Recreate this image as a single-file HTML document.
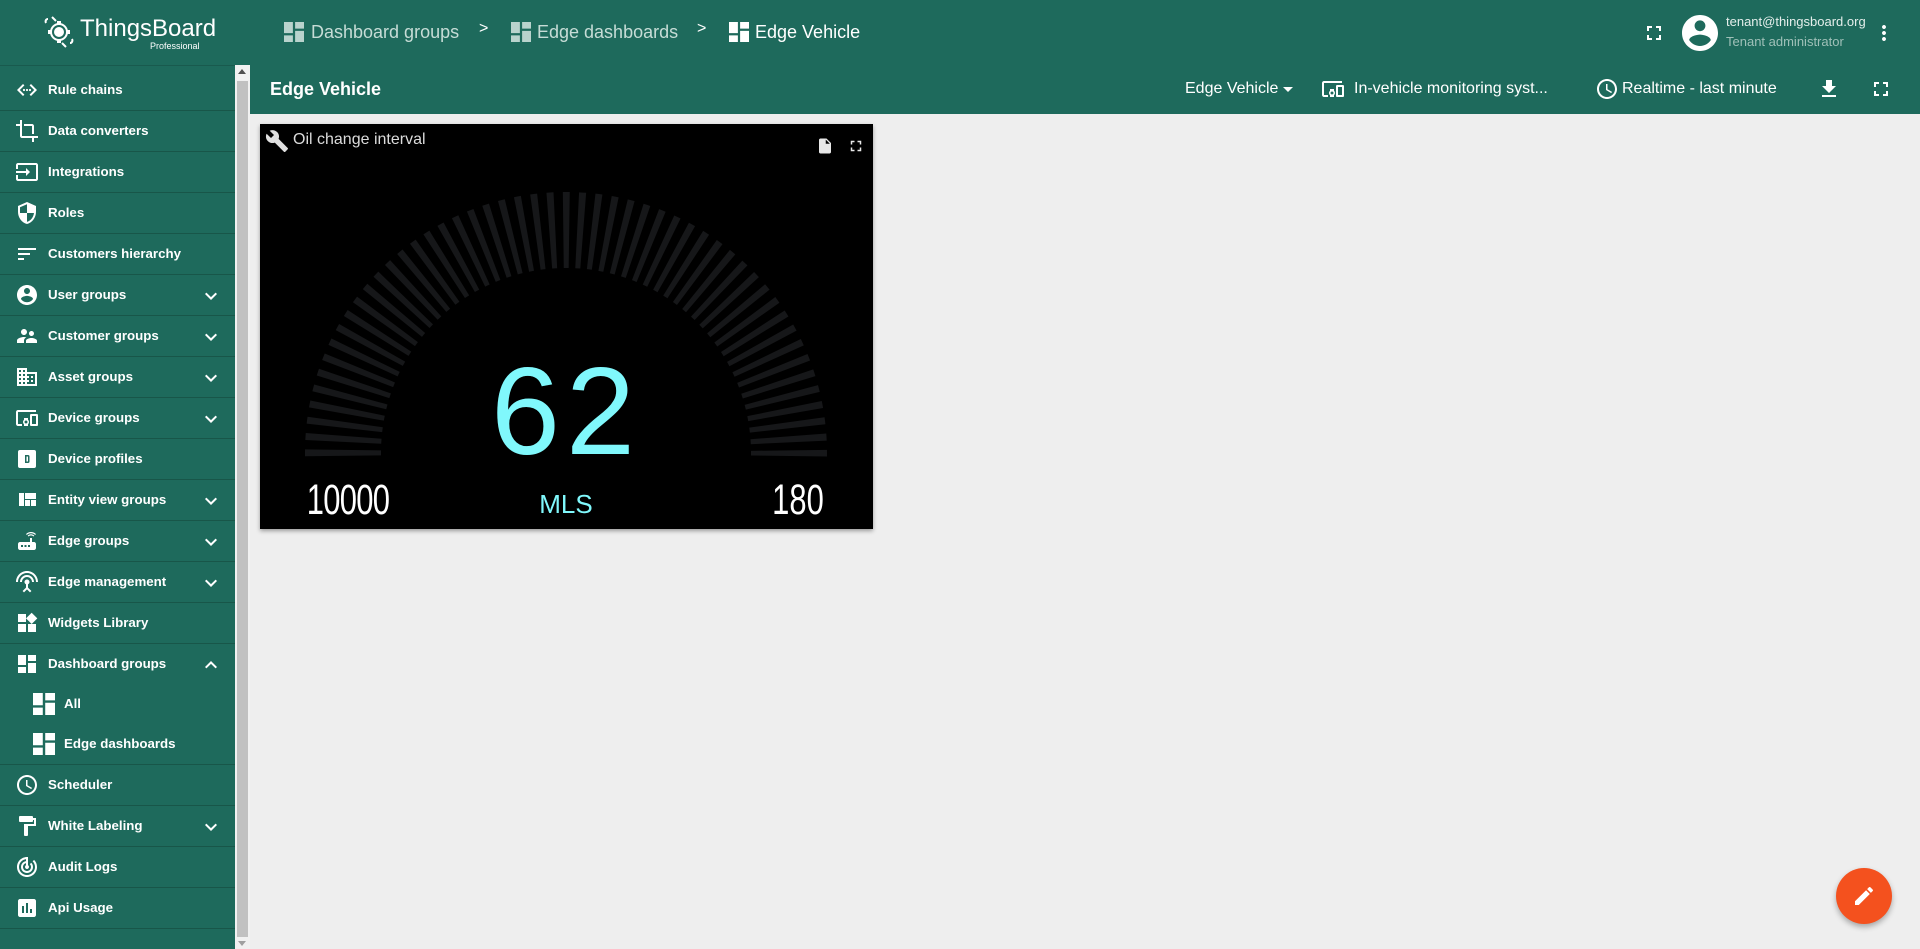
<!DOCTYPE html>
<html><head><meta charset="utf-8"><style>
*{box-sizing:border-box;margin:0;padding:0}
body{width:1920px;height:949px;overflow:hidden;background:#eeeeee;font-family:"Liberation Sans",sans-serif;position:relative}
.hdr{position:absolute;left:0;top:0;width:1920px;height:65px;background:#1e6a5c}
.side{position:absolute;left:0;top:65px;width:235px;height:884px;background:#1e6a5c;border-top:1px solid #195a4e}
.item{position:absolute;left:0;width:235px;height:41px;border-bottom:1px solid #185649;color:#fff;font-size:13.3px;font-weight:bold}
.item svg.ic{position:absolute;left:15px;top:8px;width:24px;height:24px;fill:#fff}
.item span{position:absolute;left:48px;top:12px}
.item svg.ch{position:absolute;left:199px;top:9px;width:24px;height:24px;fill:#fff}
.sub{position:absolute;left:0;width:235px;height:40px;color:#fff;font-size:13.3px;font-weight:bold}
.sub svg{position:absolute;left:33px;top:9px;width:22px;height:22px;fill:#fff}
.sub span{position:absolute;left:64px;top:12px}
.sb{position:absolute;left:235px;top:65px;width:15px;height:884px;background:#f1f1f1}
.tb{position:absolute;left:250px;top:65px;width:1670px;height:49px;background:#1e6a5c}
.w{fill:#fff}
</style></head><body>
<div class="hdr">
 <svg style="position:absolute;left:42px;top:13px" width="34" height="36" viewBox="0 0 34 36"><g fill="none" stroke="#fff" stroke-width="2"><circle cx="17" cy="19" r="8"/><path d="M6 6c-2 0-3 2-2 4M28 30c2 0 3-2 2-4M10 4l4 4M24 34l-4-4"/></g><g fill="#fff"><circle cx="17" cy="19" r="5"/><rect x="15" y="8" width="4" height="4"/><rect x="15" y="26" width="4" height="4"/><rect x="6" y="17" width="4" height="4"/><rect x="24" y="17" width="4" height="4"/></g></svg>
 <div style="position:absolute;left:80px;top:15px;color:#fff;font-size:24px">ThingsBoard</div>
 <div style="position:absolute;left:150px;top:41px;color:#fff;font-size:9px">Professional</div>
 <svg style="position:absolute;left:284px;top:22px" width="20" height="20" viewBox="3 3 18 18"><path fill="#b9d3cd" d="M3 13h8V3H3v10zm0 8h8v-6H3v6zm10 0h8V11h-8v10zm0-18v6h8V3h-8z"/></svg>
 <div style="position:absolute;left:311px;top:22px;color:#c6dcd6;font-size:18px">Dashboard groups</div>
 <div style="position:absolute;left:479px;top:20px;color:#fff;font-size:16px">&gt;</div>
 <svg style="position:absolute;left:511px;top:22px" width="20" height="20" viewBox="3 3 18 18"><path fill="#b9d3cd" d="M3 13h8V3H3v10zm0 8h8v-6H3v6zm10 0h8V11h-8v10zm0-18v6h8V3h-8z"/></svg>
 <div style="position:absolute;left:537px;top:22px;color:#c6dcd6;font-size:18px">Edge dashboards</div>
 <div style="position:absolute;left:697px;top:20px;color:#fff;font-size:16px">&gt;</div>
 <svg style="position:absolute;left:729px;top:22px" width="20" height="20" viewBox="3 3 18 18"><path fill="#fff" d="M3 13h8V3H3v10zm0 8h8v-6H3v6zm10 0h8V11h-8v10zm0-18v6h8V3h-8z"/></svg>
 <div style="position:absolute;left:755px;top:22px;color:#fff;font-size:18px">Edge Vehicle</div>
 <svg style="position:absolute;left:1642px;top:21px" width="24" height="24" viewBox="0 0 24 24"><path class="w" d="M7 14H5v5h5v-2H7v-3zm-2-4h2V7h3V5H5v5zm12 7h-3v2h5v-5h-2v3zM14 5v2h3v3h2V5h-5z"/></svg>
 <svg style="position:absolute;left:1682px;top:15px" width="36" height="36" viewBox="2 2 20 20"><path class="w" d="M12 2C6.48 2 2 6.48 2 12s4.48 10 10 10 10-4.48 10-10S17.52 2 12 2zm0 3c1.66 0 3 1.34 3 3s-1.34 3-3 3-3-1.34-3-3 1.34-3 3-3zm0 14.2c-2.5 0-4.71-1.28-6-3.22.03-1.99 4-3.08 6-3.08 1.99 0 5.97 1.09 6 3.08-1.29 1.94-3.5 3.22-6 3.22z"/></svg>
 <div style="position:absolute;left:1726px;top:14px;color:#e4eeeb;font-size:13px">tenant@thingsboard.org</div>
 <div style="position:absolute;left:1726px;top:34px;color:#9fc0b8;font-size:13px">Tenant administrator</div>
 <svg style="position:absolute;left:1872px;top:21px" width="24" height="24" viewBox="0 0 24 24"><path class="w" d="M12 8c1.1 0 2-.9 2-2s-.9-2-2-2-2 .9-2 2 .9 2 2 2zm0 2c-1.1 0-2 .9-2 2s.9 2 2 2 2-.9 2-2-.9-2-2-2zm0 6c-1.1 0-2 .9-2 2s.9 2 2 2 2-.9 2-2-.9-2-2-2z"/></svg>
</div>

<div class="side">
 <div class="item" style="top:4px"><svg class="ic" viewBox="0 0 24 24"><path d="M9.4 16.6L4.8 12l4.6-4.6L8 6l-6 6 6 6 1.4-1.4zm5.2 0l4.6-4.6-4.6-4.6L16 6l6 6-6 6-1.4-1.4z"/><circle cx="9" cy="12" r="1.1"/><circle cx="12" cy="12" r="1.1"/><circle cx="15" cy="12" r="1.1"/></svg><span>Rule chains</span></div>
 <div class="item" style="top:45px"><svg class="ic" viewBox="0 0 24 24"><path d="M17 15h2V7c0-1.1-.9-2-2-2H9v2h8v8zM7 17V1H5v4H1v2h4v10c0 1.1.9 2 2 2h10v4h2v-4h4v-2H7z"/></svg><span>Data converters</span></div>
 <div class="item" style="top:86px"><svg class="ic" viewBox="0 0 24 24"><path d="M21 3.01H3c-1.1 0-2 .9-2 2V9h2V4.99h18v14.03H3V15H1v4.01c0 1.1.9 1.98 2 1.98h18c1.1 0 2-.88 2-1.98v-14c0-1.11-.9-2-2-2zM11 16l4-4-4-4v3H1v2h10v3z"/></svg><span>Integrations</span></div>
 <div class="item" style="top:127px"><svg class="ic" viewBox="0 0 24 24"><path d="M12 1L3 5v6c0 5.55 3.84 10.74 9 12 5.16-1.26 9-6.45 9-12V5l-9-4zm0 10.99h7c-.53 4.12-3.280 7.79-7 8.94V12H5V6.3l7-3.11v8.8z"/></svg><span>Roles</span></div>
 <div class="item" style="top:168px"><svg class="ic" viewBox="0 0 24 24"><path d="M3 18h6v-2H3v2zM3 6v2h18V6H3zm0 7h12v-2H3v2z"/></svg><span>Customers hierarchy</span></div>
 <div class="item" style="top:209px"><svg class="ic" viewBox="0 0 24 24"><path d="M12 2C6.48 2 2 6.48 2 12s4.48 10 10 10 10-4.48 10-10S17.52 2 12 2zm0 3c1.66 0 3 1.34 3 3s-1.34 3-3 3-3-1.34-3-3 1.34-3 3-3zm0 14.2c-2.5 0-4.71-1.28-6-3.22.03-1.99 4-3.08 6-3.08 1.99 0 5.97 1.09 6 3.08-1.29 1.94-3.5 3.22-6 3.22z"/></svg><span>User groups</span><svg class="ch" viewBox="0 0 24 24"><path d="M16.59 8.59L12 13.17 7.41 8.59 6 10l6 6 6-6z"/></svg></div>
 <div class="item" style="top:250px"><svg class="ic" viewBox="0 0 24 24"><path d="M16.5 12c1.38 0 2.49-1.12 2.49-2.5S17.88 7 16.5 7C15.12 7 14 8.12 14 9.5s1.12 2.5 2.5 2.5zM9 11c1.66 0 2.99-1.34 2.99-3S10.66 5 9 5C7.34 5 6 6.34 6 8s1.34 3 3 3zm7.5 3c-1.83 0-5.5.92-5.5 2.75V19h11v-2.25c0-1.83-3.67-2.75-5.5-2.75zM9 13c-2.33 0-7 1.17-7 3.5V19h7v-2.25c0-.85.33-2.34 2.37-3.47C10.5 13.1 9.66 13 9 13z"/></svg><span>Customer groups</span><svg class="ch" viewBox="0 0 24 24"><path d="M16.59 8.59L12 13.17 7.41 8.59 6 10l6 6 6-6z"/></svg></div>
 <div class="item" style="top:291px"><svg class="ic" viewBox="0 0 24 24"><path d="M12 7V3H2v18h20V7H12zM6 19H4v-2h2v2zm0-4H4v-2h2v2zm0-4H4V9h2v2zm0-4H4V5h2v2zm4 12H8v-2h2v2zm0-4H8v-2h2v2zm0-4H8V9h2v2zm0-4H8V5h2v2zm10 12h-8v-2h2v-2h-2v-2h2v-2h-2V9h8v10zm-2-8h-2v2h2v-2zm0 4h-2v2h2v-2z"/></svg><span>Asset groups</span><svg class="ch" viewBox="0 0 24 24"><path d="M16.59 8.59L12 13.17 7.41 8.59 6 10l6 6 6-6z"/></svg></div>
 <div class="item" style="top:332px"><svg class="ic" viewBox="0 0 24 24"><path d="M3 6h18V4H3c-1.1 0-2 .9-2 2v12c0 1.1.9 2 2 2h4v-2H3V6zm10 6H9v1.78c-.61.55-1 1.33-1 2.22s.39 1.67 1 2.22V20h4v-1.78c.61-.55 1-1.34 1-2.22s-.39-1.67-1-2.22V12zm-2 5.5c-.83 0-1.5-.67-1.5-1.5s.67-1.5 1.5-1.5 1.5.67 1.5 1.5-.67 1.5-1.5 1.5zM22 8h-6c-.5 0-1 .5-1 1v10c0 .5.5 1 1 1h6c.5 0 1-.5 1-1V9c0-.5-.5-1-1-1zm-1 10h-4v-8h4v8z"/></svg><span>Device groups</span><svg class="ch" viewBox="0 0 24 24"><path d="M16.59 8.59L12 13.17 7.41 8.59 6 10l6 6 6-6z"/></svg></div>
 <div class="item" style="top:373px"><svg class="ic" viewBox="0 0 24 24"><path d="M5 3h14a2 2 0 0 1 2 2v14a2 2 0 0 1-2 2H5a2 2 0 0 1-2-2V5a2 2 0 0 1 2-2zm5 5v8h3a1.5 1.5 0 0 0 1.5-1.5v-5A1.5 1.5 0 0 0 13 8h-3zm1.5 1.5h1.5v5h-1.5z" fill-rule="evenodd"/></svg><span>Device profiles</span></div>
 <div class="item" style="top:414px"><svg class="ic" viewBox="0 0 24 24"><path d="M10 18h5v-6h-5v6zm-6 0h5V5H4v13zm12 0h5v-6h-5v6zM10 5v6h11V5H10z"/></svg><span>Entity view groups</span><svg class="ch" viewBox="0 0 24 24"><path d="M16.59 8.59L12 13.17 7.41 8.59 6 10l6 6 6-6z"/></svg></div>
 <div class="item" style="top:455px"><svg class="ic" viewBox="0 0 24 24"><path d="M20.2 5.9l.8-.8C19.6 3.7 17.8 3 16 3s-3.6.7-5 2.1l.8.8C13 4.8 14.5 4.2 16 4.2s3 .6 4.2 1.7zm-.9.8c-.9-.9-2.1-1.4-3.3-1.4s-2.4.5-3.3 1.4l.8.8c.7-.7 1.6-1 2.5-1 .9 0 1.8.3 2.5 1l.8-.8zM19 13h-2V9h-2v4H5c-1.1 0-2 .9-2 2v4c0 1.1.9 2 2 2h14c1.1 0 2-.9 2-2v-4c0-1.1-.9-2-2-2zM8 18H6v-2h2v2zm3.5 0h-2v-2h2v2zm3.5 0h-2v-2h2v2z"/></svg><span>Edge groups</span><svg class="ch" viewBox="0 0 24 24"><path d="M16.59 8.59L12 13.17 7.41 8.59 6 10l6 6 6-6z"/></svg></div>
 <div class="item" style="top:496px"><svg class="ic" viewBox="0 0 24 24"><path d="M12 5c-3.87 0-7 3.13-7 7h2c0-2.76 2.24-5 5-5s5 2.24 5 5h2c0-3.87-3.13-7-7-7zm1 9.29c.88-.39 1.5-1.26 1.5-2.29 0-1.38-1.12-2.5-2.5-2.5S9.5 10.62 9.5 12c0 1.02.62 1.9 1.5 2.29v3.3L7.59 21 9 22.41l3-3 3 3L16.41 21 13 17.59v-3.3zM12 1C5.93 1 1 5.930 1 12h2c0-4.97 4.03-9 9-9s9 4.03 9 9h2c0-6.07-4.93-11-11-11z"/></svg><span>Edge management</span><svg class="ch" viewBox="0 0 24 24"><path d="M16.59 8.59L12 13.17 7.41 8.59 6 10l6 6 6-6z"/></svg></div>
 <div class="item" style="top:537px"><svg class="ic" viewBox="0 0 24 24"><path d="M13 13v8h8v-8h-8zM3 21h8v-8H3v8zM3 3v8h8V3H3zm13.66-1.31L11 7.34 16.66 13l5.66-5.66-5.66-5.65z"/></svg><span>Widgets Library</span></div>
 <div class="item" style="top:578px;height:121px"><svg class="ic" viewBox="0 0 24 24"><path d="M3 13h8V3H3v10zm0 8h8v-6H3v6zm10 0h8V11h-8v10zm0-18v6h8V3h-8z"/></svg><span>Dashboard groups</span><svg class="ch" viewBox="0 0 24 24"><path d="M12 8l-6 6 1.41 1.41L12 10.83l4.59 4.58L18 14z"/></svg></div>
 <div class="sub" style="top:618px"><svg viewBox="3 3 18 18"><path d="M3 13h8V3H3v10zm0 8h8v-6H3v6zm10 0h8V11h-8v10zm0-18v6h8V3h-8z"/></svg><span>All</span></div>
 <div class="sub" style="top:658px"><svg viewBox="3 3 18 18"><path d="M3 13h8V3H3v10zm0 8h8v-6H3v6zm10 0h8V11h-8v10zm0-18v6h8V3h-8z"/></svg><span>Edge dashboards</span></div>
 <div class="item" style="top:699px"><svg class="ic" viewBox="0 0 24 24"><path d="M11.99 2C6.47 2 2 6.48 2 12s4.47 10 9.99 10C17.52 22 22 17.52 22 12S17.52 2 11.99 2zM12 20c-4.42 0-8-3.58-8-8s3.58-8 8-8 8 3.58 8 8-3.58 8-8 8zm.5-13H11v6l5.25 3.15.75-1.23-4.5-2.67z"/></svg><span>Scheduler</span></div>
 <div class="item" style="top:740px"><svg class="ic" viewBox="0 0 24 24"><path d="M18 4V3c0-.55-.45-1-1-1H5c-.55 0-1 .45-1 1v4c0 .55.45 1 1 1h12c.55 0 1-.45 1-1V6h1v4H9v11c0 .55.45 1 1 1h2c.55 0 1-.45 1-1v-9h8V4h-3z"/></svg><span>White Labeling</span><svg class="ch" viewBox="0 0 24 24"><path d="M16.59 8.59L12 13.17 7.41 8.59 6 10l6 6 6-6z"/></svg></div>
 <div class="item" style="top:781px"><svg class="ic" viewBox="0 0 24 24"><path d="M19.07 4.93l-1.41 1.41C19.1 7.79 20 9.79 20 12c0 4.42-3.58 8-8 8s-8-3.58-8-8c0-4.08 3.05-7.44 7-7.93v2.02C8.16 6.57 6 9.03 6 12c0 3.31 2.69 6 6 6s6-2.69 6-6c0-1.66-.67-3.16-1.76-4.24l-1.41 1.41C15.55 9.9 16 10.9 16 12c0 2.21-1.79 4-4 4s-4-1.79-4-4c0-1.86 1.28-3.41 3-3.86v2.14c-.6.35-1 .98-1 1.72 0 1.1.9 2 2 2s2-.9 2-2c0-.74-.4-1.38-1-1.72V2h-1C6.48 2 2 6.48 2 12s4.48 10 10 10 10-4.48 10-10c0-2.76-1.12-5.26-2.93-7.07z"/></svg><span>Audit Logs</span></div>
 <div class="item" style="top:822px"><svg class="ic" viewBox="0 0 24 24"><path d="M19 3H5c-1.1 0-2 .9-2 2v14c0 1.1.9 2 2 2h14c1.1 0 2-.9 2-2V5c0-1.1-.9-2-2-2zM9 17H7v-7h2v7zm4 0h-2V7h2v10zm4 0h-2v-4h2v4z"/></svg><span>Api Usage</span></div>
</div>
<div class="sb">
 <div style="position:absolute;left:3px;top:4px;width:0;height:0;border-left:4px solid transparent;border-right:4px solid transparent;border-bottom:5px solid #505050"></div>
 <div style="position:absolute;left:2px;top:16px;width:11px;height:856px;background:#c1c1c1"></div>
 <div style="position:absolute;left:3px;top:876px;width:0;height:0;border-left:4px solid transparent;border-right:4px solid transparent;border-top:5px solid #a0a0a0"></div>
</div>

<div class="tb">
 <div style="position:absolute;left:20px;top:14px;color:#fff;font-size:18px;font-weight:bold">Edge Vehicle</div>
 <div style="position:absolute;left:935px;top:15px;color:#fff;font-size:16px">Edge Vehicle</div>
 <div style="position:absolute;left:1033px;top:22px;width:0;height:0;border-left:5px solid transparent;border-right:5px solid transparent;border-top:5px solid #fff"></div>
 <svg style="position:absolute;left:1071px;top:12px" width="24" height="24" viewBox="0 0 24 24"><path class="w" d="M3 6h18V4H3c-1.1 0-2 .9-2 2v12c0 1.1.9 2 2 2h4v-2H3V6zm10 6H9v1.78c-.61.55-1 1.33-1 2.22s.39 1.67 1 2.22V20h4v-1.78c.61-.55 1-1.34 1-2.22s-.39-1.67-1-2.22V12zm-2 5.5c-.83 0-1.5-.67-1.5-1.5s.67-1.5 1.5-1.5 1.5.67 1.5 1.5-.67 1.5-1.5 1.5zM22 8h-6c-.5 0-1 .5-1 1v10c0 .5.5 1 1 1h6c.5 0 1-.5 1-1V9c0-.5-.5-1-1-1zm-1 10h-4v-8h4v8z"/></svg>
 <div style="position:absolute;left:1104px;top:15px;color:#fff;font-size:16px">In-vehicle monitoring syst...</div>
 <svg style="position:absolute;left:1345px;top:12px" width="24" height="24" viewBox="0 0 24 24"><path class="w" d="M11.99 2C6.47 2 2 6.48 2 12s4.47 10 9.99 10C17.52 22 22 17.52 22 12S17.52 2 11.99 2zM12 20c-4.42 0-8-3.58-8-8s3.58-8 8-8 8 3.58 8 8-3.58 8-8 8zm.5-13H11v6l5.25 3.15.75-1.23-4.5-2.67z"/></svg>
 <div style="position:absolute;left:1372px;top:15px;color:#fff;font-size:16px">Realtime - last minute</div>
 <svg style="position:absolute;left:1567px;top:12px" width="24" height="24" viewBox="0 0 24 24"><path class="w" d="M19 9h-4V3H9v6H5l7 7 7-7zM5 18v2h14v-2H5z"/></svg>
 <svg style="position:absolute;left:1619px;top:12px" width="24" height="24" viewBox="0 0 24 24"><path class="w" d="M7 14H5v5h5v-2H7v-3zm-2-4h2V7h3V5H5v5zm12 7h-3v2h5v-5h-2v3zM14 5v2h3v3h2V5h-5z"/></svg>
</div>

<div style="position:absolute;left:260px;top:124px;width:613px;height:405px;background:#000;box-shadow:0 2px 4px rgba(0,0,0,.35)">
 <svg style="position:absolute;left:5px;top:5px" width="24" height="24" viewBox="0 0 24 24"><path fill="#e0e0e0" d="M22.7 19l-9.1-9.1c.9-2.3.4-5-1.5-6.9-2-2-5-2.4-7.4-1.3L9 6 6 9 1.6 4.7C.4 7.1.9 10.1 2.9 12.1c1.9 1.9 4.6 2.4 6.9 1.5l9.1 9.1c.4.4 1 .4 1.4 0l2.3-2.3c.5-.4.5-1.1.1-1.4z"/></svg>
 <div style="position:absolute;left:33px;top:7px;color:#dcdcdc;font-size:16px">Oil change interval</div>
 <svg style="position:absolute;left:556px;top:13px" width="18" height="18" viewBox="0 0 24 24"><path fill="#e8e8e8" d="M14 2H6c-1.1 0-2 .9-2 2v16c0 1.1.9 2 2 2h12c1.1 0 2-.9 2-2V8l-6-6zm-1 7V3.5L18.5 9H13zM9 18l3-3-3-3v2H7v2h2v2z"/></svg>
 <svg style="position:absolute;left:587px;top:13px" width="18" height="18" viewBox="0 0 24 24"><path fill="#e8e8e8" d="M7 14H5v5h5v-2H7v-3zm-2-4h2V7h3V5H5v5zm12 7h-3v2h5v-5h-2v3zM14 5v2h3v3h2V5h-5z"/></svg>
 <svg style="position:absolute;left:0;top:0" width="613" height="405">
  <defs><clipPath id="cp"><rect x="0" y="0" width="613" height="333"/></clipPath></defs>
  <circle cx="306" cy="329" r="223" fill="none" stroke="#161719" stroke-width="76" stroke-dasharray="6 8.012" stroke-dashoffset="3" clip-path="url(#cp)"/>
  <text x="306" y="330" text-anchor="middle" font-family="Liberation Sans,sans-serif" font-size="124" fill="#80f8fc" letter-spacing="6">62</text>
  <text x="306" y="389" text-anchor="middle" font-family="Liberation Sans,sans-serif" font-size="26" fill="#80f8fc">MLS</text>
  <text x="88" y="390" text-anchor="middle" font-family="Liberation Sans,sans-serif" font-size="43" fill="#fff" letter-spacing="-1" transform="translate(88 0) scale(0.72 1) translate(-88 0)">10000</text>
  <text x="538" y="390" text-anchor="middle" font-family="Liberation Sans,sans-serif" font-size="43" fill="#fff" transform="translate(538 0) scale(0.72 1) translate(-538 0)">180</text>
 </svg>
</div>

<div style="position:absolute;left:1836px;top:868px;width:56px;height:56px;border-radius:50%;background:#f4511e;box-shadow:0 3px 6px rgba(0,0,0,.3)">
 <svg style="position:absolute;left:16px;top:16px" width="24" height="24" viewBox="0 0 24 24"><path class="w" d="M3 17.25V21h3.75L17.81 9.94l-3.75-3.75L3 17.25zM20.71 7.04c.39-.39.39-1.02 0-1.41l-2.34-2.34c-.39-.39-1.02-.39-1.41 0l-1.83 1.83 3.75 3.75 1.83-1.83z"/></svg>
</div>
</body></html>
